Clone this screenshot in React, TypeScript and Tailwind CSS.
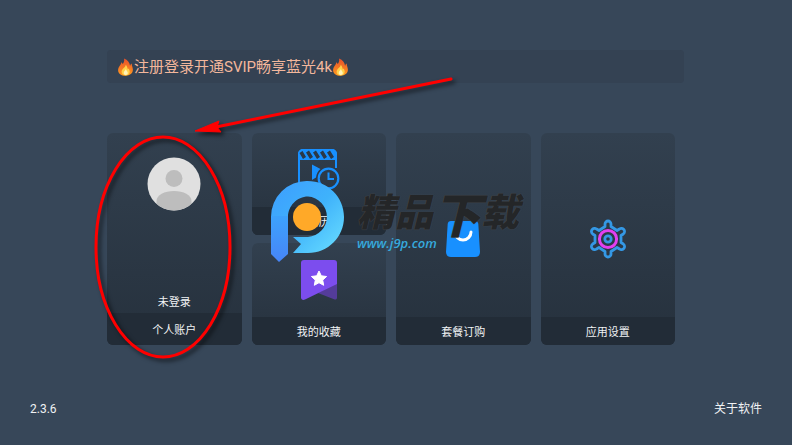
import React from 'react';

interface CardProps {
  label: string;
  footerClass?: string;
  bodyClass?: string;
  className?: string;
  children: React.ReactNode;
}

const Card: React.FC<CardProps> = ({ label, footerClass = 'h-7', bodyClass = '', className = '', children }) => (
  <button
    type="button"
    className={`flex w-full flex-col overflow-hidden rounded-md bg-linear-to-b from-[#32404f] to-[#26313d] text-[11px] leading-4 text-[#f0f2f4] ${className}`}
  >
    <span className={`flex w-full flex-1 flex-col items-center justify-center ${bodyClass}`}>{children}</span>
    <span className={`flex w-full items-center justify-center bg-[#222c37] pt-1 ${footerClass}`}>{label}</span>
  </button>
);

const FlameIcon = () => (
  <svg viewBox="0 0 16 18" className="h-[18px] w-[17px]" aria-hidden="true">
    <defs>
      <linearGradient id="flame" x1="0" y1="0" x2="0" y2="1">
        <stop offset="0" stopColor="#e8502a" />
        <stop offset="1" stopColor="#ff9a1f" />
      </linearGradient>
    </defs>
    <path
      d="M6.500.5c.6 2.400-.2 4-1.300 5.600C4.800 5.400 4.400 4.800 3.700 4.300c.2 2.400-3.100 4.500-3.100 7.900 0 3.500 3.200 5.500 7.400 5.500s7.400-2.200 7.400-5.900c0-2.400-1.100-4-1.200-6.400-1 .6-1.400 1.400-1.600 2.500C12.100 4.700 10.300 1.800 6.500.5Z"
      fill="url(#flame)"
    />
    <path
      d="M8.200 6.800c.3 2.400-4.100 3.900-4.100 7 0 2.200 1.800 3.600 4 3.600s4.100-1.400 4.100-3.700c0-1.500-.7-2.200-.9-3.300-.5.300-.8.700-.9 1.200-.5-1.700-.9-3.500-2.200-4.800Z"
      fill="#ffd24a"
    />
    <path d="M8.200 11c.1 1.300-2 2.200-2 4 0 1.300.9 2 2 2s2.100-.7 2.100-2c0-1.600-1.500-2.400-2.100-4Z" fill="#fff3b8" />
  </svg>
);

const AvatarIcon = () => (
  <svg viewBox="0 0 54 54" className="size-[54px]" aria-hidden="true">
    <clipPath id="avatar">
      <circle cx="27" cy="27" r="26.500" />
    </clipPath>
    <g clipPath="url(#avatar)">
      <rect width="54" height="54" fill="#e0e0e0" />
      <circle cx="27" cy="21.500" r="8.500" fill="#bdbdbd" />
      <path d="M9.500 44c0-6 8-10 17.500-10s17.500 4 17.500 10v10h-35Z" fill="#bdbdbd" />
    </g>
  </svg>
);

const HistoryIcon = () => (
  <svg viewBox="0 0 42 44" className="h-11 w-[42px]" fill="none" stroke="#1890ff" strokeWidth="2" aria-hidden="true">
    <path d="M38 20V6a4 4 0 0 0-4-4H5a4 4 0 0 0-4 4v32a4 4 0 0 0 4 4h15" />
    <path d="M1 11V6a4 4 0 0 1 4-4h29a4 4 0 0 1 4 4v5Z" fill="#1890ff" />
    <path d="M3 4l3.500 6M9.500 3.500l4 6.500m3-6.500 4 6.500m3-6.500 4 6.500m3-6.500 4 6.500" stroke="#2b3847" strokeWidth="3.500" />
    <path d="M14 16.500 22.500 21c-2.500 2-4 4.500-4.500 8.500l-4 2.500Z" fill="#1890ff" stroke="none" />
    <circle cx="30.500" cy="30.500" r="9.800" strokeWidth="2.200" />
    <path d="M30.500 24.500V31H36" />
  </svg>
);

const FavoriteIcon = () => (
  <svg viewBox="0 0 38 42" className="h-[42px] w-[38px]" aria-hidden="true">
    <path d="M18 34 37 24v14.500c0 2-1.500 2.500-3 1.700Z" fill="#543c9a" />
    <path d="M4 1h30a3 3 0 0 1 3 3v21L5 40.500c-2 1-4 0-4-2V4a3 3 0 0 1 3-3Z" fill="#7c4dee" />
    <path
      d="m19 12 2.300 4.800 5.300.7-3.900 3.600 1 5.200-4.700-2.600-4.700 2.600 1-5.200-3.900-3.600 5.300-.7Z"
      fill="#fff"
      stroke="#fff"
      strokeLinejoin="round"
    />
  </svg>
);

const BagIcon = () => (
  <svg viewBox="0 0 34 36" className="h-9 w-[34px]" aria-hidden="true">
    <path d="M5 0h24q3 0 3.300 3L34 31q0 5-5 5H5q-5 0-5-5L1.700 3Q2 0 5 0Z" fill="#1890ff" />
    <path d="M9 11a8 8 0 0 0 16 0" fill="none" stroke="#fff" strokeWidth="3" strokeLinecap="round" />
  </svg>
);

const SettingsIcon = () => (
  <svg viewBox="0 0 38 40" className="h-10 w-[38px]" fill="none" stroke="#3498e5" strokeWidth="2.800" aria-hidden="true">
    <path
      strokeLinejoin="round"
      d="M16 7.500V5a3 3 0 0 1 6 0v2.500l6 4 2.500-1.500a3 3 0 0 1 3.800 5L32 16.500v7l2.300 1.500a3 3 0 0 1-3.800 5L28 28.500l-6 4V35a3 3 0 0 1-6 0v-2.500l-6-4L7.500 30a3 3 0 0 1-3.800-5L6 23.500v-7L3.700 15a3 3 0 0 1 3.800-5l2.500 1.500Z"
    />
    <circle cx="19" cy="20" r="8.600" stroke="#e33ff0" strokeWidth="3" />
    <circle cx="19" cy="20" r="3.200" />
  </svg>
);

const Watermark = () => (
  <div className="pointer-events-none absolute top-[181px] left-[271px] flex gap-3">
    <svg viewBox="0 0 74 82" className="h-[82px] w-[74px] shrink-0" aria-hidden="true">
      <defs>
        <linearGradient id="ring" x1="0" y1="0" x2="1" y2="1">
          <stop offset="0" stopColor="#3d9dff" />
          <stop offset="0.500" stopColor="#3fb2fb" />
          <stop offset="1" stopColor="#6be0ff" />
        </linearGradient>
        <linearGradient id="stem" x1="0" y1="0" x2="0" y2="1">
          <stop offset="0" stopColor="#3da2fc" />
          <stop offset="1" stopColor="#4785f7" />
        </linearGradient>
      </defs>
      <path
        d="M0 36A36 36 0 0 1 36.500 0C57 0 73 16 73 36S57 72 37 72H22l8-9-8-7h15a20.300 20.300 0 0 0 0-40.500C26 15.500 17 25 17 36Z"
        fill="url(#ring)"
      />
      <path d="M0 35h17v38l-9 8-8-8Z" fill="url(#stem)" />
      <circle cx="36" cy="36" r="14" fill="#ffa928" />
    </svg>
    <div className="flex flex-col pt-2">
      <span className="flex h-12 items-start text-[38px] leading-12 font-black text-[#242628] italic [text-shadow:0_0_1px_#55585c]">
        <span>精品</span>
        <span className="text-5xl leading-14">下</span>
        <span>载</span>
      </span>
      <span className="font-['Open_Sans',sans-serif] text-[13px] leading-3 font-semibold text-[#36a9dc] italic">
        www.j9p.com
      </span>
    </div>
  </div>
);

const Annotation = () => (
  <svg
    viewBox="0 0 370 300"
    className="pointer-events-none absolute top-[70px] left-[90px] h-[300px] w-[370px] drop-shadow-[3px_3px_2px_rgba(0,0,0,0.600)]"
    aria-hidden="true"
  >
    <path d="M361 9 126 57" stroke="#f00" strokeWidth="3" strokeLinecap="round" />
    <path d="m105 61 24-10-2 6 4 5Z" fill="#f00" stroke="#f00" />
    <ellipse cx="73" cy="177" rx="67" ry="110" fill="none" stroke="#f00" strokeWidth="3" />
  </svg>
);

export default function App() {
  return (
    <div className="relative flex min-h-screen flex-col overflow-hidden bg-[#374759] font-['Roboto','Noto_Sans_CJK_SC',sans-serif]">
      <main className="pt-[50px] pr-[108px] pl-[107px]">
        <div className="flex h-[33px] items-center rounded-sm bg-[#344253] px-[10px] pt-px text-[15px] leading-5 text-[#f3b79c]">
          <FlameIcon />
          <h1>注册登录开通SVIP畅享蓝光4k</h1>
          <FlameIcon />
        </div>

        <div className="mt-[50px] mr-[9px] grid grid-cols-4 gap-[10px]">
          <Card label="个人账户" footerClass="h-8">
            <span className="flex flex-1 flex-col items-center justify-between pt-6 pb-[2px]">
              <AvatarIcon />
              <span>未登录</span>
            </span>
          </Card>
          <div className="flex flex-col gap-2">
            <Card label="观看历史" className="h-[102px]">
              <HistoryIcon />
            </Card>
            <Card label="我的收藏" className="h-[102px]">
              <FavoriteIcon />
            </Card>
          </div>
          <Card label="套餐订购" bodyClass="pt-7">
            <BagIcon />
          </Card>
          <Card label="应用设置" bodyClass="pt-7">
            <SettingsIcon />
          </Card>
        </div>
      </main>

      <footer className="mt-auto flex items-center justify-between px-[30px] pb-7 text-xs text-[#f0f2f4]">
        <span>2.3.6</span>
        <a href="#about">关于软件</a>
      </footer>

      <Watermark />
      <Annotation />
    </div>
  );
}
